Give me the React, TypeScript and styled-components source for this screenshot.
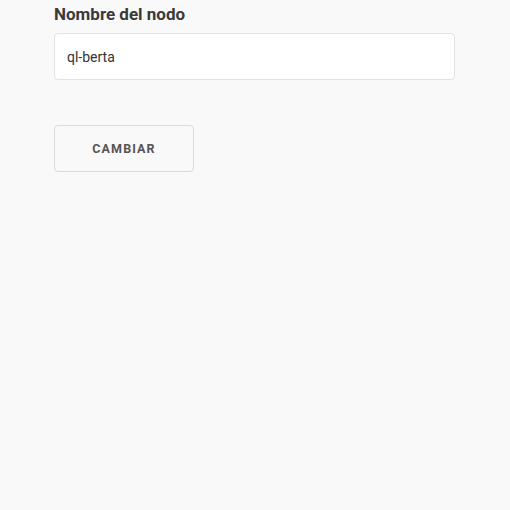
import React from "react";
import styled, { createGlobalStyle } from "styled-components";

const GlobalStyle = createGlobalStyle`
  html, body {
    margin: 0;
    padding: 0;
    background-color: #f9f9f9;
    font-family: Roboto, "Liberation Sans", sans-serif;
  }
`;

const Page = styled.div`
  width: 510px;
  height: 510px;
  padding: 0 55px 0 54px;
  box-sizing: border-box;
  display: flex;
  flex-direction: column;
`;

const Label = styled.label`
  font-size: 17px;
  font-weight: 700;
  color: #3a3a3a;
  line-height: 20px;
  margin-top: 4px;
  margin-bottom: 9px;
`;

const Input = styled.input`
  height: 47px;
  box-sizing: border-box;
  padding: 0 12px;
  border: 1px solid #e2e2e2;
  border-radius: 4px;
  background-color: #ffffff;
  font-family: Roboto, "Liberation Sans", sans-serif;
  font-size: 14px;
  color: #333333;
  outline: none;
`;

const Button = styled.button`
  margin-top: 45px;
  width: 140px;
  height: 47px;
  border: 1px solid #dadada;
  border-radius: 4px;
  background-color: #f9f9f9;
  font-family: Roboto, "Liberation Sans", sans-serif;
  font-size: 12.5px;
  font-weight: 700;
  letter-spacing: 1.1px;
  color: #555555;
  cursor: pointer;
`;

export default function App() {
  return (
    <>
      <GlobalStyle />
      <Page>
        <Label htmlFor="node-name">Nombre del nodo</Label>
        <Input id="node-name" defaultValue="ql-berta" />
        <Button>CAMBIAR</Button>
      </Page>
    </>
  );
}
